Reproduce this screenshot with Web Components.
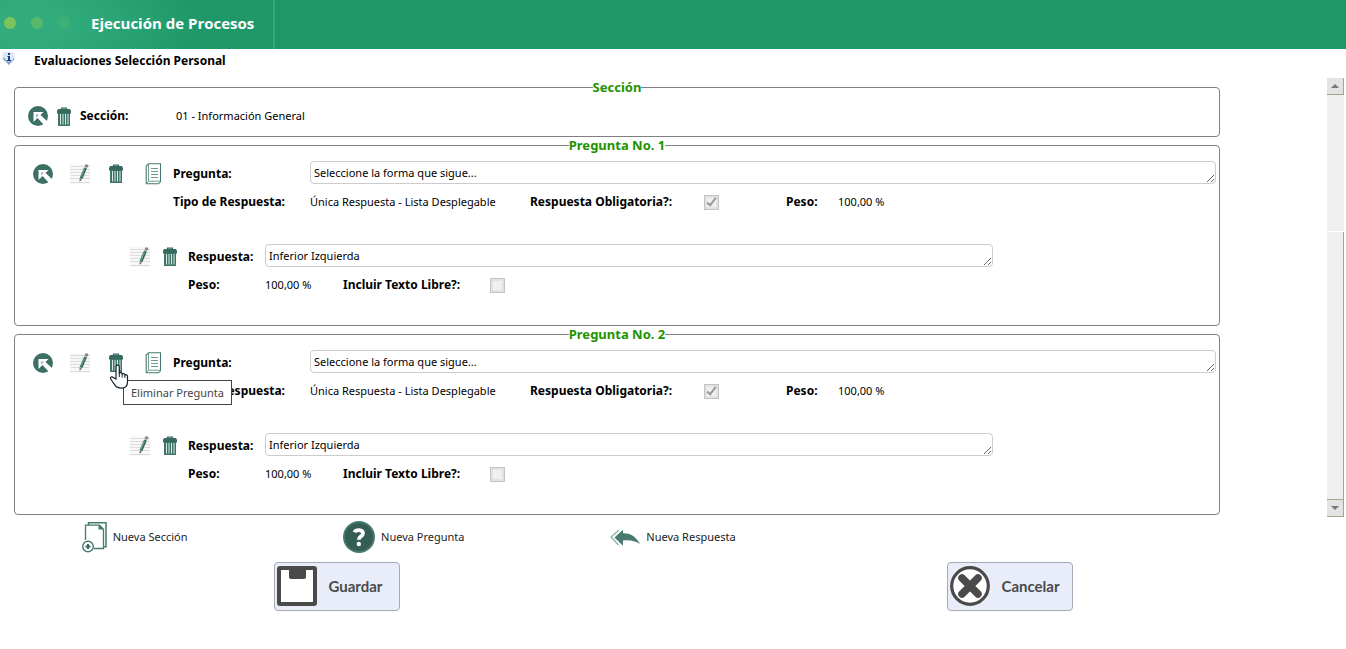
<!DOCTYPE html>
<html lang="es">
<head>
<meta charset="utf-8">
<title>Ejecución de Procesos</title>
<style>
  body { margin: 0; background: #fff; color: #000; font: 11px/16px "Noto Sans", sans-serif; }
</style>
</head>
<body>
<app-header heading="Ejecución de Procesos"></app-header>
<page-title>Evaluaciones Selección Personal</page-title>
<scroll-panel>
  <section-card legend="Sección" label="Sección:">01 - Información General</section-card>
  <question-card legend="Pregunta No. 1" text="Seleccione la forma que sigue...">
    <answer-block text="Inferior Izquierda"></answer-block>
  </question-card>
  <question-card legend="Pregunta No. 2" text="Seleccione la forma que sigue..." hovered>
    <answer-block text="Inferior Izquierda"></answer-block>
  </question-card>
</scroll-panel>
<action-bar>
  <action-link icon="newsection">Nueva Sección</action-link>
  <action-link icon="newquestion">Nueva Pregunta</action-link>
  <action-link icon="newanswer">Nueva Respuesta</action-link>
</action-bar>
<button-bar>
  <big-button icon="save">Guardar</big-button>
  <big-button icon="cancel">Cancelar</big-button>
</button-bar>

<script>
const ICONS = {
  back: [20, 20, '<circle cx="10" cy="10" r="10" fill="#3c7064"/><path d="M5.500 6h10l-3 3 7 6.500-3.500 3.500-6.500-7-4 4z" fill="#fff"/><path d="M8 8.500h3L8 11.500z" fill="#8fb0a8"/>'],
  edit: [20, 20, '<path d="M0 0h20v20H0z" fill="#f8f8f8"/><path d="M0 2.500h20M0 5.500h20M0 8.500h20M0 11.500h20M0 14.500h20M0 18.500h20" stroke="#dcdcdc"/><path d="M15.500 4L11 14.500" stroke="#36695f" stroke-width="3"/><path d="M14.500 5l-3.500 8" stroke="#75a99b"/><path d="M9.500 14.400l2.600 1.100-2.400 2.600z" fill="#777"/><circle cx="16.500" cy="2" r="1.800" fill="#888"/>'],
  trash: [14, 19, '<path d="M4.500 2.500V1.200h5v1.300" fill="none" stroke="#36695f" stroke-width="1.200"/><path d="M1 2h12l1 2v2.500H0V4z" fill="#36695f"/><path d="M1 6h12v13H1z" fill="#3f7468"/><path d="M3.500 7v10.500M6 7v10.500M8.500 7v10.500M11 7v10.500" stroke="#dceae6"/>'],
  notes: [17, 22, '<path d="M3.500.8h12v18l-2 2H1.200V3z" fill="#fff" stroke="#467a6e" stroke-width="1.100"/><path d="M3.500.8v17.400h12M3.500 18.200l-2 2.300" fill="none" stroke="#6f9d91"/><path d="M6 5.500h7M6 8.500h7M6 11.500h7M6 14.500h7" stroke="#6f9d91"/>'],
  info: [13, 14, '<path d="M.5 1C3-.4 10-.4 12.500 1v5c0 3.500-3.500 4.500-5.500 8C5 10.500.5 9.500.5 6z" fill="#dce6f4"/><path d="M1 5c0 4 4 4 6 8 1-3.500 5.500-4 5.500-7.500L10 8.500 6 10z" fill="#7995c4"/><path d="M5.500 4H8v4h1v1H5V8h1V5h-.5zM6 1h2v2H6z" fill="#173f95"/>'],
  newsection: [25, 31, '<path d="M6.500 3V.8H24v24h-2.500" fill="none" stroke="#467a6e" stroke-width="1.500"/><path d="M3.500 18V3.200h14l4 4v19.300H12" fill="none" stroke="#467a6e" stroke-width="1.300"/><path d="M16.500 2.800v4.700h5.500z" fill="#467a6e"/><circle cx="6" cy="24.500" r="5.300" fill="#fff" stroke="#467a6e" stroke-width="1.400"/><path d="M3.500 24.500h5M6 22v5" stroke="#36695f" stroke-width="2"/>'],
  newquestion: [32, 32, '<circle cx="16" cy="16" r="16" fill="#467a6e"/><circle cx="16" cy="16" r="14" fill="#345d53"/><path d="M11.500 11.300c1.200-3 8.500-3.200 8.500 1 0 2.900-4.200 3.200-4.200 6.500" fill="none" stroke="#fff" stroke-width="3.800"/><circle cx="15.800" cy="23" r="2.200" fill="#fff"/>'],
  newanswer: [30, 17, '<path d="M4.500 8.500L13 .8v3.500c8.500-.3 13.500 4.500 17 10.700-5-3.500-11-4.300-17-3.500v5.200z" fill="#467a6e"/><path d="M9 1L1 8l7.500 8" fill="none" stroke="#8fb5ab" stroke-width="1.500"/>'],
  save: [40, 40, '<rect width="40" height="40" rx="3" fill="#4a4a4a"/><path d="M4 4h32v32H4z" fill="#fff"/><path d="M12 3h17v8a2 2 0 0 1-2 2H14a2 2 0 0 1-2-2z" fill="#4a4a4a"/>'],
  cancel: [40, 40, '<circle cx="20" cy="20" r="18.300" fill="#fff" stroke="#4a4a4a" stroke-width="3.200"/><path d="M12 12l16 16M28 12L12 28" stroke="#4a4a4a" stroke-width="7.500" stroke-linecap="round"/>'],
  pointer: [20, 25, '<path d="M7 15V3c0-2.600 3.300-2.600 3.300 0v6c1-.8 2.600-.3 2.900.8 1.300-.6 2.500 0 2.700 1 1.500-.4 2.600.3 2.600 1.800V18c0 4-2 6.200-6 6.200-3.500 0-5-.7-6.500-3l-4-5.700c-1.500-2.200.8-3.500 2.300-2z" fill="#fff" stroke="#16202c" stroke-width="1.200"/><path d="M10.300 9v4M13.200 10v3.500M15.900 11v3" stroke="#16202c"/>']
};

class Base extends HTMLElement {
  connectedCallback() {
    if (this.shadowRoot) return;
    this.attachShadow({ mode: 'open' }).innerHTML = this.render();
  }
  a(name) { return this.getAttribute(name) || ''; }
}

customElements.define('ui-icon', class extends Base {
  render() {
    const [w, h, body] = ICONS[this.a('name')];
    return `<style>:host{display:inline-flex;flex:none}svg{display:block}</style>
      <svg width="${w}" height="${h}" viewBox="0 0 ${w} ${h}" aria-hidden="true">${body}</svg>`;
  }
});

customElements.define('icon-button', class extends Base {
  render() {
    return `<style>
      :host{display:inline-flex;position:relative;flex:none}
      button{display:flex;border:0;padding:0;background:none;cursor:pointer}
      </style><button type="button" aria-label="${this.a('label')}"><ui-icon name="${this.a('icon')}"></ui-icon></button><slot></slot>`;
  }
});

customElements.define('tool-tip', class extends Base {
  render() {
    return `<style>
      :host{position:absolute;left:14px;top:27px;z-index:2}
      span{display:block;box-sizing:border-box;height:25px;padding:0 7px;border:1px solid #444;background:#fff;color:#444;
        line-height:23px;white-space:nowrap}
      ui-icon{position:absolute;left:-14px;top:-16px}
      </style><span role="tooltip"><slot></slot></span><ui-icon name="pointer"></ui-icon>`;
  }
});

customElements.define('app-header', class extends Base {
  render() {
    return `<style>
      :host{display:flex;height:49px;background:#1e9869}
      .brand{box-sizing:border-box;display:flex;align-items:center;gap:15px;width:275px;padding:0 0 4px 4px;border-right:2px solid #36a77c;
        background:radial-gradient(ellipse 170px 90px at 30px 24px,#32ac7d 20%,#1e9869)}
      i{width:12px;height:12px;border-radius:50%;background:#7cc35a}
      i:nth-child(2){background:#59b96a} i:nth-child(3){background:#3eb075}
      h1{margin:0 0 0 6px;color:#fff;font:bold 15px/20px "Open Sans","Noto Sans",sans-serif;white-space:nowrap}
      </style><div class="brand"><i></i><i></i><i></i><h1>${this.a('heading')}</h1></div>`;
  }
});

customElements.define('page-title', class extends Base {
  render() {
    return `<style>
      :host{display:flex;gap:19px;height:29px;padding-left:2px;box-sizing:border-box}
      ui-icon{margin-top:3px}
      h2{margin:4px 0 0;font-size:12px;line-height:16px}
      </style><ui-icon name="info"></ui-icon><h2><slot></slot></h2>`;
  }
});

customElements.define('scroll-panel', class extends Base {
  render() {
    return `<style>
      :host{display:flex;padding-right:2px}
      .content{flex:1;min-width:0;padding:1px 107px 2px 14px}
      .bar{display:flex;flex-direction:column;width:17px;background:#efefef}
      b{box-sizing:border-box;height:17px;border:solid #a3a68b;border-width:0 1px 1px 0;background:#e3e3e3;display:grid;place-items:center}
      b::before{content:"";border:4px solid transparent;border-top:0;border-bottom-color:#777}
      b.down::before{border:4px solid transparent;border-bottom:0;border-top-color:#777}
      .track{flex:34}
      .thumb{flex:66;box-sizing:border-box;border:solid #a3a68b;border-width:0 1px 1px 0;box-shadow:0 -1px #fff,0 1px #fff}
      </style><div class="content"><slot></slot></div>
      <div class="bar" aria-hidden="true"><b></b><div class="track"></div><div class="thumb"></div><b class="down"></b></div>`;
  }
});

customElements.define('legend-box', class extends Base {
  render() {
    return `<style>
      :host{display:block}
      fieldset{margin:0;padding:0;min-width:0;border:1px solid #808080;border-radius:4px}
      legend{margin:0 auto;padding:0;color:#229300;font:bold 13px/17px "Noto Sans",sans-serif}
      </style><fieldset><legend>${this.a('legend')}</legend><slot></slot></fieldset>`;
  }
});

customElements.define('section-card', class extends Base {
  render() {
    return `<style>
      :host{display:block}
      .row{display:flex;align-items:center;height:40px;padding:0 13px}
      icon-button{margin-right:9px}
      strong{width:96px;font-size:12px}
      </style><legend-box legend="${this.a('legend')}"><div class="row">
        <icon-button icon="back" label="Mover Sección"></icon-button>
        <icon-button icon="trash" label="Eliminar Sección"></icon-button>
        <strong>${this.a('label')}</strong><span><slot></slot></span></div></legend-box>`;
  }
});

const FIELD_CSS = `
  textarea{display:block;align-self:start;box-sizing:border-box;width:100%;height:23px;margin:0;padding:2px 3px;border:1px solid #ccc;border-radius:4px;
    background:#fff;color:#000;font:inherit;line-height:17px;resize:both;overflow:hidden}
  input{appearance:none;box-sizing:border-box;width:15px;height:15px;margin:0;border:1px solid #c3c3c3;
    background:#f0f0f0;box-shadow:inset 0 0 0 2px #e2e2e2;position:relative}
  input:checked::before{content:"";position:absolute;left:4px;top:0;width:3px;height:8px;border:solid #9a9a9a;border-width:0 2px 2px 0;transform:rotate(38deg)}
  label,strong{font-size:12px;font-weight:bold;white-space:nowrap}
  .line{display:grid;align-items:center}`;

customElements.define('question-card', class extends Base {
  render() {
    const tip = this.hasAttribute('hovered') ? '<tool-tip>Eliminar Pregunta</tool-tip>' : '';
    return `<style>${FIELD_CSS}
      :host{display:block}
      .body{padding:7px 3px 0 18px}
      .first{grid-template-columns:140px 137px minmax(0,1fr);height:25px}
      .tools{display:grid;grid-template-columns:37px 39px 36px 17px;align-items:center}
      .second{grid-template-columns:137px 220px 174px 82px 52px auto;height:32px;padding-left:140px}
      </style><legend-box legend="${this.a('legend')}"><div class="body">
        <div class="line first">
          <div class="tools">
            <icon-button icon="back" label="Mover Pregunta"></icon-button>
            <icon-button icon="edit" label="Editar Pregunta"></icon-button>
            <icon-button icon="trash" label="Eliminar Pregunta">${tip}</icon-button>
            <icon-button icon="notes" label="Copiar Pregunta"></icon-button>
          </div>
          <label for="q">Pregunta:</label><textarea id="q" rows="1" readonly>${this.a('text')}</textarea>
        </div>
        <div class="line second">
          <strong>Tipo de Respuesta:</strong><span>Única Respuesta - Lista Desplegable</span>
          <label for="req">Respuesta Obligatoria?:</label><input id="req" type="checkbox" checked disabled>
          <strong>Peso:</strong><span>100,00 %</span>
        </div>
        <slot></slot>
      </div></legend-box>`;
  }
});

customElements.define('answer-block', class extends Base {
  render() {
    return `<style>${FIELD_CSS}
      :host{display:block;padding:26px 0 24px 97px}
      .first{grid-template-columns:33px 25px 77px minmax(0,67%);height:25px}
      .second{grid-template-columns:77px 78px 147px auto;justify-content:start;height:32px;padding-left:58px}
      </style>
      <div class="line first">
        <icon-button icon="edit" label="Editar Respuesta"></icon-button>
        <icon-button icon="trash" label="Eliminar Respuesta"></icon-button>
        <label for="r">Respuesta:</label><textarea id="r" rows="1" readonly>${this.a('text')}</textarea>
      </div>
      <div class="line second">
        <strong>Peso:</strong><span>100,00 %</span>
        <label for="free">Incluir Texto Libre?:</label><input id="free" type="checkbox" disabled>
      </div>`;
  }
});

customElements.define('action-bar', class extends Base {
  render() {
    return `<style>:host{display:grid;grid-template-columns:repeat(5,1fr);justify-items:center;padding-top:3px}</style><slot></slot>`;
  }
});

customElements.define('action-link', class extends Base {
  render() {
    return `<style>
      :host{display:block}
      a{display:flex;align-items:center;gap:6px;height:34px;color:#222;text-decoration:none}
      </style><a href="#"><ui-icon name="${this.a('icon')}"></ui-icon><span><slot></slot></span></a>`;
  }
});

customElements.define('button-bar', class extends Base {
  render() {
    return `<style>:host{display:grid;grid-template-columns:1fr 1fr;justify-items:center;padding-top:8px}</style><slot></slot>`;
  }
});

customElements.define('big-button', class extends Base {
  render() {
    return `<style>
      :host{display:block}
      button{display:flex;align-items:center;gap:12px;box-sizing:border-box;width:126px;height:49px;padding:0 2px 1px;border:1px solid #a4a9b3;
        border-radius:4px;background:#e8edf9;color:#4a4a4a;font:bold 15px/20px Lato,sans-serif;cursor:pointer}
      </style><button type="button"><ui-icon name="${this.a('icon')}"></ui-icon><span><slot></slot></span></button>`;
  }
});
</script>
</body>
</html>
